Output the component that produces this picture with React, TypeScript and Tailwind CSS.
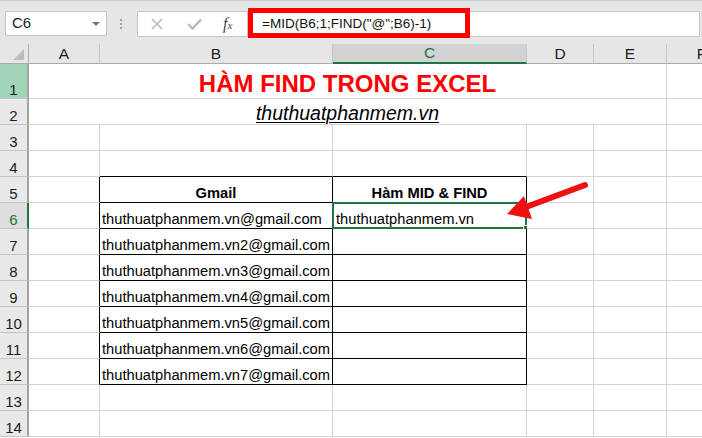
import clsx from "clsx";

const FONT = { fontFamily: '"Liberation Sans", Arial, sans-serif' };

const COLS = ["A", "B", "C", "D", "E", "F"];
const EMAILS = [
  "thuthuatphanmem.vn@gmail.com",
  "thuthuatphanmem.vn2@gmail.com",
  "thuthuatphanmem.vn3@gmail.com",
  "thuthuatphanmem.vn4@gmail.com",
  "thuthuatphanmem.vn5@gmail.com",
  "thuthuatphanmem.vn6@gmail.com",
  "thuthuatphanmem.vn7@gmail.com",
];

const FormulaBar = () => (
  <div className="relative h-[44px] border-t border-[#cfcfcf] bg-[#e6e6e6]">
    {/* name box */}
    <div className="absolute left-[5px] top-[10px] flex h-[25px] w-[102px] items-center justify-between border border-[#c6c6c6] bg-white pl-[6px] pr-[6px] text-[15px] text-[#222]">
      <span>C6</span>
      <span className="h-0 w-0 border-x-[4px] border-t-[4px] border-x-transparent border-t-[#777]" />
    </div>
    <div className="absolute left-[120px] top-[18px] flex flex-col gap-[2px]">
      <span className="h-[2px] w-[2px] bg-[#a0a0a0]" />
      <span className="h-[2px] w-[2px] bg-[#a0a0a0]" />
      <span className="h-[2px] w-[2px] bg-[#a0a0a0]" />
    </div>
    {/* cancel / enter / fx */}
    <div className="absolute left-[137px] top-[10px] flex h-[26px] w-[111px] items-center border border-[#c6c6c6] bg-white">
      <svg className="ml-[13px]" width="12" height="12" viewBox="0 0 12 12">
        <path d="M1 1 L11 11 M11 1 L1 11" stroke="#b9b9b9" strokeWidth="1.6" />
      </svg>
      <svg className="ml-[24px]" width="15" height="12" viewBox="0 0 15 12">
        <path d="M1 6 L5.5 10.5 L14 1.5" stroke="#b9b9b9" strokeWidth="2.4" fill="none" />
      </svg>
      <span className="ml-[21px] text-[16px] italic text-[#444]" style={{ fontFamily: '"Liberation Serif", serif' }}>
        f<span className="text-[11px]">x</span>
      </span>
    </div>
    {/* formula input */}
    <div className="absolute left-[247px] right-[2px] top-[10px] flex h-[26px] items-center border border-[#c6c6c6] bg-white pl-[14px] text-[13.5px] text-[#111]">
      =MID(B6;1;FIND("@";B6)-1)
    </div>
    <div className="absolute left-[248px] top-[7px] h-[30px] w-[222px] border-[5px] border-[#ff0000]" />
  </div>
);

const Sheet = () => {
  const inTable = (r: number) => r >= 5 && r <= 12;

  const cellCls = (col: number, r: number) =>
    clsx(
      "relative border-b border-r border-[#d4d4d4] bg-white",
      // black table borders B5:C12
      col === 0 && inTable(r) && "border-r-black",
      (col === 1 || col === 2) && (inTable(r) || r === 4) && "border-b-black",
      (col === 1 || col === 2) && inTable(r) && "border-r-black",
    );

  const rowHeader = (r: number) => (
    <div
      key={`rh-${r}`}
      className={clsx(
        "flex items-end justify-center border-b border-r-2 border-b-[#c4c4c4] pb-[1px] text-[15px] leading-none",
        r === 1 ? "bg-[#a0d6b7] text-[#1c1c1c]" : r === 6 ? "bg-[#dedede] text-[#217346]" : "bg-[#e9e9e9] text-[#1c1c1c]",
        r === 6 ? "border-r-[#217346]" : "border-r-[#a3a3a3]",
      )}
    >
      {r}
    </div>
  );

  const rows = [];
  for (let r = 1; r <= 14; r++) {
    rows.push(rowHeader(r));
    if (r === 1) {
      rows.push(
        <div key="t1" className="col-span-5 flex items-end justify-center border-b border-r border-[#d4d4d4] bg-white text-[24px] font-bold leading-none text-[#ff0000]">
          <span className="pb-[2px]">HÀM FIND TRONG EXCEL</span>
        </div>,
      );
      rows.push(<div key="t1f" className={cellCls(5, r)} />);
      continue;
    }
    if (r === 2) {
      rows.push(
        <div key="t2" className="col-span-5 flex items-end justify-center border-b border-r border-[#d4d4d4] bg-white text-[19.5px] italic leading-none text-black">
          <span className="pb-[1px] underline decoration-1 underline-offset-[2px]">thuthuatphanmem.vn</span>
        </div>,
      );
      rows.push(<div key="t2f" className={cellCls(5, r)} />);
      continue;
    }
    for (let c = 0; c < 6; c++) {
      let content: React.ReactNode = null;
      let extra = "";
      if (r === 5 && c === 1) {
        content = "Gmail";
        extra = "bg-[#bfbfbf] font-bold justify-center";
      } else if (r === 5 && c === 2) {
        content = "Hàm MID & FIND";
        extra = "bg-[#bfbfbf] font-bold justify-center";
      } else if (c === 1 && r >= 6 && r <= 12) {
        content = EMAILS[r - 6];
        extra = "pl-[2px]";
      } else if (c === 2 && r === 6) {
        content = "thuthuatphanmem.vn";
        extra = "pl-[3px]";
      }
      rows.push(
        <div
          key={`${r}-${c}`}
          className={clsx(cellCls(c, r), "flex items-end whitespace-nowrap pb-[1px] text-[14.7px] leading-none text-black", extra)}
        >
          {content}
          {r === 6 && c === 2 && (
            <>
              <span className="pointer-events-none absolute -left-[1px] -top-[1px] -bottom-[1px] -right-[1px] border-2 border-[#217346]" />
              <span className="absolute -bottom-[4px] -right-[4px] h-[7px] w-[7px] border border-white bg-[#217346]" />
            </>
          )}
        </div>,
      );
    }
  }

  return (
    <div className="relative grid grid-cols-[29px_71px_233px_194px_67px_73px_70px] grid-rows-[20px_35px_repeat(13,26px)]">
      {/* corner */}
      <div className="relative border-b border-r border-[#ababab] bg-[#e6e6e6]">
        <span className="absolute bottom-[3px] right-[4px] h-0 w-0 border-b-[11px] border-l-[11px] border-b-[#bdbdbd] border-l-transparent" />
      </div>
      {COLS.map((l) => (
        <div
          key={l}
          className={clsx(
            "flex items-center justify-center border-r border-r-[#c6c6c6] text-[15.5px]",
            l === "C" ? "border-b-2 border-b-[#217346] bg-[#d2d2d2] text-[#217346]" : "border-b border-b-[#ababab] bg-[#e6e6e6] text-[#1c1c1c]",
          )}
        >
          {l}
        </div>
      ))}
      {rows}

      {/* annotation arrow */}
      <svg className="pointer-events-none absolute left-0 top-0" width="702" height="400" viewBox="0 44 702 400">
        <line x1="585" y1="185" x2="522" y2="208.5" stroke="#ee1111" strokeWidth="6" strokeLinecap="round" />
        <polygon points="507,214 524,196 532,219" fill="#ee1111" />
      </svg>
    </div>
  );
};

export default function App() {
  return (
    <div className="h-[438px] w-[702px] overflow-hidden bg-white" style={FONT}>
      <FormulaBar />
      <Sheet />
    </div>
  );
}
